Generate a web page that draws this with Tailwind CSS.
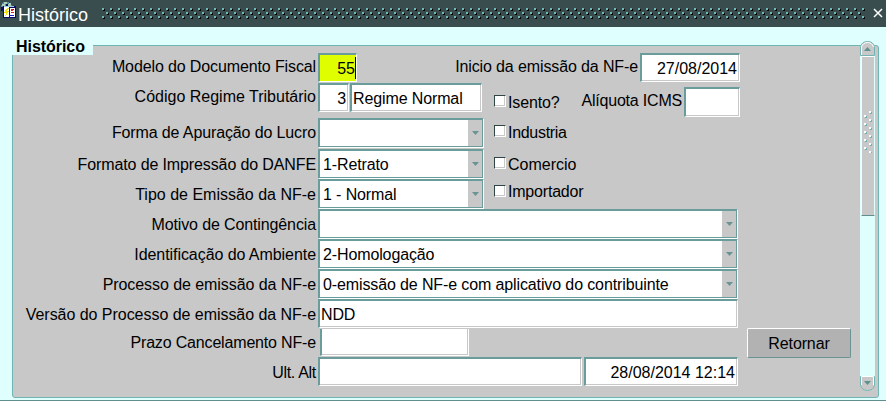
<!DOCTYPE html>
<html lang="pt-BR">
<head>
  <meta charset="UTF-8" />
  <meta name="viewport" content="width=device-width, initial-scale=1.0"/>
  <title>Histórico</title>
  <script src="https://cdn.jsdelivr.net/npm/@tailwindcss/browser@4"></script>
</head>
<body class="w-[886px] h-[401px] overflow-hidden flex flex-col bg-[#dfffff] border-b border-[#5f8f8f] font-['Liberation_Sans',Arial,sans-serif] text-base text-black">

  <!-- title bar -->
  <header class="h-[27px] shrink-0 flex bg-[#394d4e] text-white">
    <svg class="w-[18px] h-[20px] shrink-0" viewBox="0 0 18 20" shape-rendering="crispEdges">
      <circle cx="6.500" cy="7" r="5.500" fill="#5a86b0"/>
      <path d="M4 2h3v2H5v2H2V4h2zM9 3h2v3H8V4h1z" fill="#a8d0b8"/>
      <path d="M1 7h2v4H1zM6 4h2v3H6z" fill="#101060"/>
      <path d="M3 6h13v12H3z" fill="#0a0a60"/>
      <path d="M4 7h5v10H4zM10 8h5v9h-5z" fill="#fff"/>
      <path d="M4 6h10v1H4z" fill="#9ccfe0"/>
      <path d="M7 8l-3 5h2l-1 4 4-6H7l2-3z" fill="#f4e000"/>
      <path d="M11 9h2v2h-2zM11 12h3v1h-3z" fill="#d02020"/>
      <path d="M9 15h5v1H9zM13 9h1v1h-1z" fill="#2020c0"/>
    </svg>
    <h1 class="w-[84px] text-[18px] leading-[30px]">Histórico</h1>
    <svg class="w-[764px] h-[12px] mt-2 shrink-0" shape-rendering="crispEdges">
      <defs>
        <pattern id="dots" width="8" height="8" patternUnits="userSpaceOnUse">
          <path d="M1 1h2v2H1zM5 5h2v2H5z" fill="#000"/>
          <path d="M0 0h2v2H0zM4 4h2v2H4z" fill="#70b8b8"/>
        </pattern>
      </defs>
      <rect width="764" height="12" fill="url(#dots)"/>
    </svg>
    <svg class="w-[10px] h-[10px] ml-[7px] mt-2" viewBox="0 0 10 10" fill="none" stroke="#fff" stroke-width="1.5">
      <path d="M1 1l8 8M9 1l-8 8"/>
    </svg>
  </header>

  <main class="relative mt-[18px] ml-3 w-[867px] h-[353px] flex shrink-0 bg-[#c8c8c8] border border-[#70b4b4] rounded-[3px]">
    <h2 class="absolute -left-px top-[-14px] w-[81px] h-[23px] pl-1 bg-[#dfffff] font-bold leading-[29px] tracking-[-0.05px]">Histórico</h2>

    <form class="w-[847px] pt-[7px] flex flex-col leading-[30px] tracking-[-0.12px] whitespace-nowrap">
      <div class="h-[30px] flex">
        <label class="w-[303px] -mt-px text-right">Modelo do Documento Fiscal</label>
        <div class="ml-0.5 w-[39px] h-[29px] bg-[#dfff00] border-2 border-r border-b border-[#6a9c9c] border-r-white border-b-white leading-7 tracking-normal flex justify-end"><span>55</span><i class="w-px h-[22px] mt-0.5 bg-black"></i></div>
        <label class="w-[281px] -mt-px text-right">Inicio da emissão da NF-e</label>
        <div class="ml-[2px] w-[100px] h-[29px] pr-0.5 bg-white border-2 border-r border-b border-[#6a9c9c] border-r-white border-b-white shadow-[inset_-1px_-1px_#c8c8c8] leading-7 tracking-normal text-right">27/08/2014</div>
      </div>

      <div class="h-[30px] flex">
        <label class="w-[303px] -mt-px text-right tracking-normal">Código Regime Tributário</label>
        <div class="ml-0.5 w-[31px] h-[29px] pr-0.5 bg-white border-2 border-r border-b border-[#6a9c9c] border-r-white border-b-white shadow-[inset_-1px_-1px_#c8c8c8] leading-7 text-right">3</div>
        <div class="ml-px w-[132px] h-[29px] pl-px bg-white border-2 border-r border-b border-[#6a9c9c] border-r-white border-b-white shadow-[inset_-1px_-1px_#c8c8c8] leading-7">Regime Normal</div>
        <i class="ml-[12px] mt-[12px] size-3 bg-white border border-[#2f4546] border-r-white border-b-white shadow-[inset_-1px_-1px_#c8c8c8]"></i>
        <label class="ml-0.5 mt-[5px] w-[71px]">Isento?</label>
        <label class="mt-[3px] w-[103px] text-right tracking-[-0.2px]">Alíquota ICMS</label>
        <div class="ml-[2px] mt-[4px] w-[56px] h-[30px] bg-white border-2 border-r border-b border-[#6a9c9c] border-r-white border-b-white shadow-[inset_-1px_-1px_#c8c8c8]"></div>
      </div>

      <div class="mt-[5px] h-[30px] flex">
        <label class="w-[303px] text-right">Forma de Apuração do Lucro</label>
        <div class="ml-0.5 w-[165px] h-[29px] flex justify-end bg-white border-2 border-r border-b border-[#6a9c9c] shadow-[1px_1px_#fff]">
          <span class="w-[14px] flex items-center justify-center bg-[#c8c8c8]"><svg class="w-[7px] h-1" viewBox="0 0 7 4"><path d="M0 0h7L3.500 4z" fill="#6a9494"/></svg></span>
        </div>
        <i class="ml-[11px] mt-[7px] size-3 bg-white border border-[#2f4546] border-r-white border-b-white shadow-[inset_-1px_-1px_#c8c8c8]"></i>
        <label class="ml-0.5 tracking-[-0.3px]">Industria</label>
      </div>

      <div class="mt-px h-[30px] flex">
        <label class="w-[303px] mt-px text-right">Formato de Impressão do DANFE</label>
        <div class="ml-0.5 w-[165px] h-[29px] pl-[3px] flex justify-between bg-white border-2 border-r border-b border-[#6a9c9c] shadow-[1px_1px_#fff] leading-7">
          1-Retrato
          <span class="w-[14px] flex items-center justify-center bg-[#c8c8c8]"><svg class="w-[7px] h-1" viewBox="0 0 7 4"><path d="M0 0h7L3.500 4z" fill="#6a9494"/></svg></span>
        </div>
        <i class="ml-[11px] mt-[8px] size-3 bg-white border border-[#2f4546] border-r-white border-b-white shadow-[inset_-1px_-1px_#c8c8c8]"></i>
        <label class="ml-0.5 mt-px tracking-normal">Comercio</label>
      </div>

      <div class="h-[30px] flex">
        <label class="w-[303px] mt-px text-right tracking-normal">Tipo de Emissão da NF-e</label>
        <div class="ml-0.5 w-[165px] h-[29px] pl-[3px] flex justify-between bg-white border-2 border-r border-b border-[#6a9c9c] shadow-[1px_1px_#fff] leading-7">
          1 - Normal
          <span class="w-[14px] flex items-center justify-center bg-[#c8c8c8]"><svg class="w-[7px] h-1" viewBox="0 0 7 4"><path d="M0 0h7L3.500 4z" fill="#6a9494"/></svg></span>
        </div>
        <i class="ml-[11px] mt-[6px] size-3 bg-white border border-[#2f4546] border-r-white border-b-white shadow-[inset_-1px_-1px_#c8c8c8]"></i>
        <label class="ml-0.5 -mt-[2px] tracking-[-0.2px]">Importador</label>
      </div>

      <div class="h-[30px] flex">
        <label class="w-[303px] mt-px text-right">Motivo de Contingência</label>
        <div class="ml-0.5 w-[419px] h-[29px] flex justify-end bg-white border-2 border-r border-b border-[#6a9c9c] shadow-[1px_1px_#fff]">
          <span class="w-[14px] flex items-center justify-center bg-[#c8c8c8]"><svg class="w-[7px] h-1" viewBox="0 0 7 4"><path d="M0 0h7L3.500 4z" fill="#6a9494"/></svg></span>
        </div>
      </div>

      <div class="h-[30px] flex">
        <label class="w-[303px] mt-px text-right tracking-[-0.06px]">Identificação do Ambiente</label>
        <div class="ml-0.5 w-[419px] h-[29px] pl-[3px] flex justify-between bg-white border-2 border-r border-b border-[#6a9c9c] shadow-[1px_1px_#fff] leading-7">
          2-Homologação
          <span class="w-[14px] flex items-center justify-center bg-[#c8c8c8]"><svg class="w-[7px] h-1" viewBox="0 0 7 4"><path d="M0 0h7L3.500 4z" fill="#6a9494"/></svg></span>
        </div>
      </div>

      <div class="h-[30px] flex">
        <label class="w-[303px] mt-px text-right tracking-[-0.07px]">Processo de emissão da NF-e</label>
        <div class="ml-0.5 w-[419px] h-[29px] pl-[3px] flex justify-between bg-white border-2 border-r border-b border-[#6a9c9c] shadow-[1px_1px_#fff] leading-7">
          0-emissão de NF-e com aplicativo do contribuinte
          <span class="w-[14px] flex items-center justify-center bg-[#c8c8c8]"><svg class="w-[7px] h-1" viewBox="0 0 7 4"><path d="M0 0h7L3.500 4z" fill="#6a9494"/></svg></span>
        </div>
      </div>

      <div class="h-[30px] flex">
        <label class="w-[303px] mt-px text-right tracking-[-0.04px]">Versão do Processo de emissão da NF-e</label>
        <div class="ml-0.5 w-[420px] h-[29px] pl-px bg-white border-2 border-r border-b border-[#6a9c9c] border-r-white border-b-white shadow-[inset_-1px_-1px_#c8c8c8] leading-7">NDD</div>
      </div>

      <div class="h-7 flex">
        <label class="w-[303px] -mt-px text-right tracking-[-0.17px]">Prazo Cancelamento NF-e</label>
        <div class="ml-1 w-[149px] h-[27px] bg-white border-l-2 border-r border-b border-[#6a9c9c] border-r-white border-b-white shadow-[inset_-1px_-1px_#c8c8c8]"></div>
        <button type="button" class="ml-[278px] -mt-px w-[104px] h-[30px] shrink-0 bg-[#b2b2b2] border border-white border-r-[#6a9494] border-b-[#6a9494] rounded-[2px] leading-[29px]">Retornar</button>
      </div>

      <div class="h-[30px] flex">
        <label class="w-[303px] mt-px text-right tracking-[-0.3px]">Ult. Alt</label>
        <div class="ml-0.5 w-[264px] h-[29px] bg-white border-2 border-r border-b border-[#6a9c9c] border-r-white border-b-white shadow-[inset_-1px_-1px_#c8c8c8]"></div>
        <div class="ml-[2px] w-[154px] h-[29px] pr-0.5 bg-white border-2 border-r border-b border-[#6a9c9c] border-r-white border-b-white shadow-[inset_-1px_-1px_#c8c8c8] leading-7 tracking-normal text-right">28/08/2014 12:14</div>
      </div>
    </form>

    <!-- scrollbar -->
    <div class="-mt-[5px] w-[15px] h-[350px] flex flex-col bg-[#dfffff] rounded-full">
      <svg class="w-[15px] h-[15px] shrink-0" viewBox="0 0 15 15">
        <path d="M.5 14.500V5.500Q2 .5 7.500.5T14.500 5.500V14.500z" fill="#c8c8c8" stroke="#70b4b4"/>
        <path d="M1.500 14V6Q3 1.500 7.500 1.500T13.500 6" fill="none" stroke="#fff"/>
        <path d="M4 10h7L7.500 6z" fill="#5f8f8f"/>
      </svg>
      <div class="ml-px w-[14px] h-[160px] pt-[54px] pl-[2px] bg-[#c8c8c8] border border-white border-r-[#dfffff] border-b-[#5f8f8f]">
        <svg class="w-[9px] h-[42px]" shape-rendering="crispEdges">
          <defs>
            <pattern id="grip" width="9" height="8" patternUnits="userSpaceOnUse">
              <path d="M6 1h2v2H6zM1 5h2v2H1z" fill="#6fb0b0"/>
              <path d="M5 0h2v2H5zM0 4h2v2H0z" fill="#fff"/>
            </pattern>
          </defs>
          <rect width="9" height="42" fill="url(#grip)"/>
        </svg>
      </div>
      <svg class="mt-auto w-[15px] h-[15px] shrink-0" viewBox="0 0 15 15">
        <path d="M.5.5V9.500Q2 14.500 7.500 14.500T14.500 9.500V.5z" fill="#c8c8c8" stroke="#70b4b4"/>
        <path d="M1.500 9V.5H13.500V9" fill="none" stroke="#fff"/>
        <path d="M4 5h7L7.500 9z" fill="#5f8f8f"/>
      </svg>
    </div>
  </main>
</body>
</html>
